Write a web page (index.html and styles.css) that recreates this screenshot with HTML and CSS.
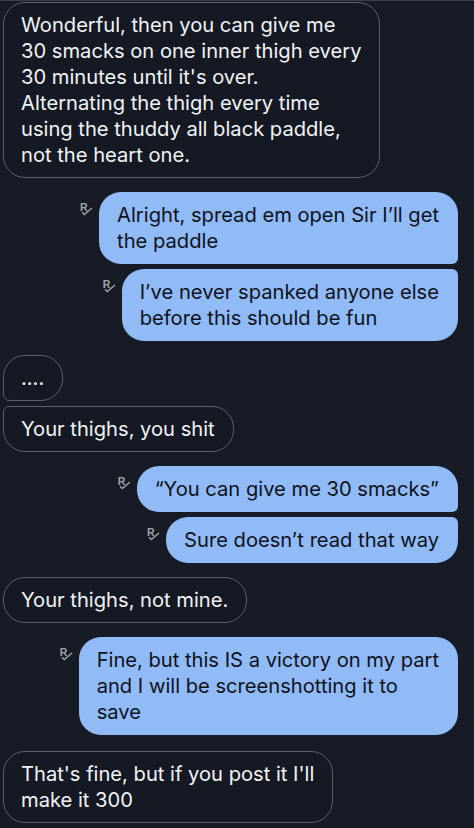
FILE: index.html
```html
<!DOCTYPE html>
<html lang="en">
<head>
    <meta charset="UTF-8">
    <meta name="viewport" content="width=device-width, initial-scale=1.0">
    <title>Messages</title>
    <link rel="stylesheet" href="styles.css">
</head>
<body>
    <div class="thread">
        <!-- Them -->
        <div class="msg in solo">Wonderful, then you can give me<br>30 smacks on one inner thigh every<br>30 minutes until it's over.<br>Alternating the thigh every time<br>using the thuddy all black paddle,<br>not the heart one.</div>

        <!-- Me -->
        <div class="row group">
            <span class="read"><span class="read-r">R</span><svg viewBox="1 4 12 9" width="12" height="9"><path d="M2 9.3 L4.3 11.6 L12 5" fill="none" stroke="currentColor" stroke-width="1.4"/></svg></span>
            <div class="msg out top">Alright, spread em open Sir I’ll get<br>the paddle</div>
        </div>
        <div class="row next">
            <span class="read"><span class="read-r">R</span><svg viewBox="1 4 12 9" width="12" height="9"><path d="M2 9.3 L4.3 11.6 L12 5" fill="none" stroke="currentColor" stroke-width="1.4"/></svg></span>
            <div class="msg out bottom">I’ve never spanked anyone else<br>before this should be fun</div>
        </div>

        <div class="msg in top group dots">....</div>
        <div class="msg in bottom next">Your thighs, you shit</div>

        <div class="row group">
            <span class="read"><span class="read-r">R</span><svg viewBox="1 4 12 9" width="12" height="9"><path d="M2 9.3 L4.3 11.6 L12 5" fill="none" stroke="currentColor" stroke-width="1.4"/></svg></span>
            <div class="msg out top">“You can give me 30 smacks”</div>
        </div>
        <div class="row next">
            <span class="read"><span class="read-r">R</span><svg viewBox="1 4 12 9" width="12" height="9"><path d="M2 9.3 L4.3 11.6 L12 5" fill="none" stroke="currentColor" stroke-width="1.4"/></svg></span>
            <div class="msg out bottom">Sure doesn’t read that way</div>
        </div>

        <div class="msg in solo group">Your thighs, not mine.</div>

        <div class="row group">
            <span class="read"><span class="read-r">R</span><svg viewBox="1 4 12 9" width="12" height="9"><path d="M2 9.3 L4.3 11.6 L12 5" fill="none" stroke="currentColor" stroke-width="1.4"/></svg></span>
            <div class="msg out solo">Fine, but this IS a victory on my part<br>and I will be screenshotting it to<br>save</div>
        </div>

        <div class="msg in solo group last">That's fine, but if you post it I'll<br>make it 300</div>
    </div>
</body>
</html>
```

FILE: styles.css
```css
/* Page */
body {
    margin: 0;
    background-color: #161b25;
    border-top: 1px solid #3b3f48;
    font-family: Inter, 'Liberation Sans', sans-serif;
    font-size: 20.15px;
    line-height: 26px;
    overflow: hidden;
}

.thread {
    display: flex;
    flex-direction: column;
    padding: 1px 16px 0 3px;
}

/* spacing between groups / inside a group */
.group {
    margin-top: 14px;
}

.next {
    margin-top: 5px;
}

.last {
    margin-top: 16px;
}

/* Bubbles */
.msg {
    width: fit-content;
    white-space: nowrap;
    border-radius: 22px;
}

.msg.in {
    color: #f2f3f5;
    background-color: #141923;
    border: 1px solid #5b5f68;
    padding: 9px 18px 9px 17px;
}

.msg.in.top {
    border-bottom-left-radius: 6px;
}

.msg.in.bottom {
    border-top-left-radius: 6px;
}

.msg.out {
    color: #0e121a;
    background-color: #90bbf6;
    padding: 10px 19px 10px 18px;
}

.msg.out.top {
    border-bottom-right-radius: 6px;
}

.msg.out.bottom {
    border-top-right-radius: 6px;
}

.dots {
    padding-right: 22px;
}

/* Outgoing row with read receipt */
.row {
    display: flex;
    justify-content: flex-end;
    align-items: flex-start;
    gap: 6px;
}

.read {
    flex-shrink: 0;
    display: grid;
    width: 13px;
    height: 14px;
    margin-top: 10px;
    color: #a0a4ac;
}

.read-r,
.read svg {
    grid-area: 1 / 1;
}

.read-r {
    font-family: 'Liberation Sans', sans-serif;
    font-size: 10.5px;
    font-weight: bold;
    line-height: 10px;
    align-self: start;
    justify-self: start;
}

.read svg {
    align-self: end;
    justify-self: end;
}
```
